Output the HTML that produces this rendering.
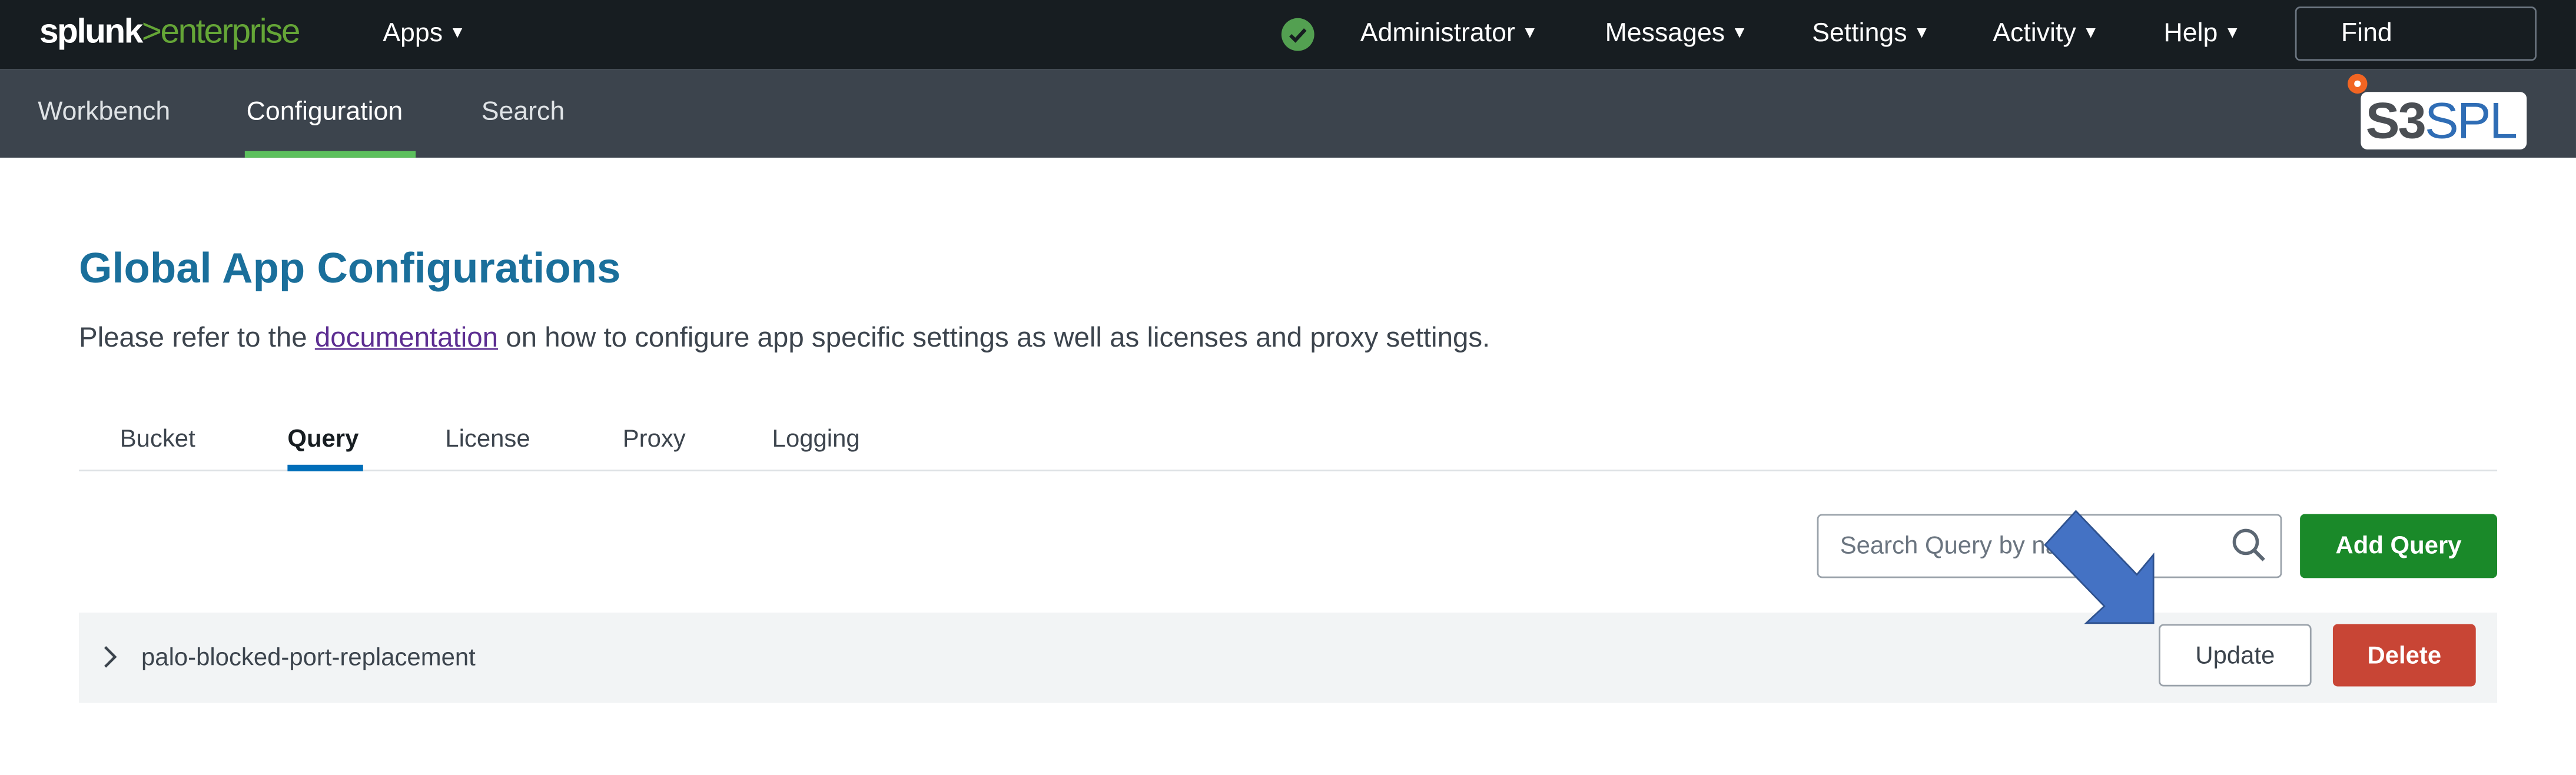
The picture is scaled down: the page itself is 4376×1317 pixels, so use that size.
<!DOCTYPE html>
<html><head><meta charset="utf-8"><style>
html,body{margin:0;padding:0;width:4376px;height:1317px;overflow:hidden;background:#fff}
#w{position:absolute;left:0;top:0;width:1568px;height:472px;transform:scale(2.7908);transform-origin:0 0;font-family:"Liberation Sans",sans-serif}
.a{position:absolute;white-space:nowrap}
.top{position:absolute;left:0;top:0;width:1568px;height:42px;background:#171d21}
.sub{position:absolute;left:0;top:42px;width:1568px;height:54px;background:#3c444d}
.nav{color:#fff;font-size:16px;top:12px}
.nav i{font-style:normal;font-size:10px;margin-left:4px;vertical-align:2px}
.sn{color:#dfe3e6;font-size:16px;top:60px}
.tab{font-size:15px;color:#3c444d;top:259px}
.btn{position:absolute;border-radius:3px;font-size:15px;text-align:center;box-sizing:border-box}
</style></head><body><div id="w">
<div class="top"></div>
<div class="a" style="left:24px;top:8px;font-size:21px;font-weight:bold;color:#fff;letter-spacing:-0.9px">splunk<span style="color:#65a637;font-weight:normal">&gt;enterprise</span></div>
<div class="a nav" style="left:233px">Apps<i>▼</i></div>
<svg class="a" style="left:779px;top:10px" width="22" height="22" viewBox="0 0 22 22"><circle cx="11" cy="11" r="10" fill="#53a051"/><path d="M6.5 11.5l3 3 6-6.5" stroke="#171d21" stroke-width="2.2" fill="none"/></svg>
<div class="a nav" style="left:828px">Administrator<i>▼</i></div>
<div class="a nav" style="left:977px">Messages<i>▼</i></div>
<div class="a nav" style="left:1103px">Settings<i>▼</i></div>
<div class="a nav" style="left:1213px">Activity<i>▼</i></div>
<div class="a nav" style="left:1317px">Help<i>▼</i></div>
<div class="a" style="left:1397px;top:4px;width:147px;height:33px;border:1px solid #6b7580;border-radius:3px;box-sizing:border-box"></div>
<div class="a nav" style="left:1425px">Find</div>
<div class="sub"></div>
<div class="a sn" style="left:23px">Workbench</div>
<div class="a sn" style="left:150px;color:#fff">Configuration</div>
<div class="a" style="left:149px;top:92px;width:104px;height:4px;background:#5cc05c"></div>
<div class="a sn" style="left:293px">Search</div>
<div class="a" style="left:1437px;top:56px;width:101px;height:35px;background:#fff;border-radius:4px"></div>
<div class="a" style="left:1429px;top:45px;width:12px;height:12px;border-radius:50%;background:#f26522"></div>
<div class="a" style="left:1433px;top:49px;width:4px;height:4px;border-radius:50%;background:#fff"></div>
<div class="a" style="left:1440px;top:56px;font-size:31px;line-height:36px;letter-spacing:-1px"><b style="color:#4b4f54">S3</b><span style="color:#2f6db5">SPL</span></div>

<div class="a" style="left:48px;top:148px;font-size:26px;font-weight:bold;color:#1a6f9b">Global App Configurations</div>
<div class="a" style="left:48px;top:196px;font-size:17px;color:#3c444d">Please refer to the <span style="color:#5c2d91;text-decoration:underline">documentation</span> on how to configure app specific settings as well as licenses and proxy settings.</div>

<div class="a tab" style="left:73px">Bucket</div>
<div class="a tab" style="left:175px;font-weight:bold;color:#171d21">Query</div>
<div class="a tab" style="left:271px">License</div>
<div class="a tab" style="left:379px">Proxy</div>
<div class="a tab" style="left:470px">Logging</div>
<div class="a" style="left:48px;top:286px;width:1472px;height:1px;background:#dde1e4"></div>
<div class="a" style="left:175px;top:283px;width:46px;height:4px;background:#006eb9"></div>

<div class="a" style="left:1106px;top:313px;width:283px;height:39px;border:1px solid #9aa2aa;border-radius:3px;box-sizing:border-box;background:#fff"></div>
<div class="a" style="left:1120px;top:324px;font-size:15px;color:#6b7580">Search Query by name</div>
<svg class="a" style="left:1357px;top:320px" width="24" height="24" viewBox="0 0 24 24"><circle cx="10" cy="10" r="7" stroke="#5c6773" stroke-width="2" fill="none"/><path d="M15 15l6 6" stroke="#5c6773" stroke-width="2.2"/></svg>
<div class="btn" style="left:1400px;top:313px;width:120px;height:39px;background:#1a8929;color:#fff;font-weight:bold;line-height:40px">Add Query</div>

<div class="a" style="left:48px;top:373px;width:1472px;height:55px;background:#f2f4f5"></div>
<svg class="a" style="left:60px;top:392px" width="14" height="16" viewBox="0 0 14 16"><path d="M4 2l6 6-6 6" stroke="#3c444d" stroke-width="1.6" fill="none"/></svg>
<div class="a" style="left:86px;top:392px;font-size:15px;color:#3c444d">palo-blocked-port-replacement</div>
<div class="btn" style="left:1314px;top:380px;width:93px;height:38px;border:1px solid #9aa2aa;background:#fff;color:#3c444d;line-height:37px">Update</div>
<div class="btn" style="left:1420px;top:380px;width:87px;height:38px;background:#c84535;color:#fff;font-weight:bold;line-height:39px">Delete</div>

<svg class="a" style="left:0;top:0" width="1568" height="472"><polygon points="1263.6,311.2 1300.7,349.9 1310.8,337.8 1310.8,379.4 1269.9,379.4 1280.9,369.1 1244.8,331.8" fill="#4472c4" stroke="#2f528f" stroke-width="1"/></svg>
</div></body></html>
